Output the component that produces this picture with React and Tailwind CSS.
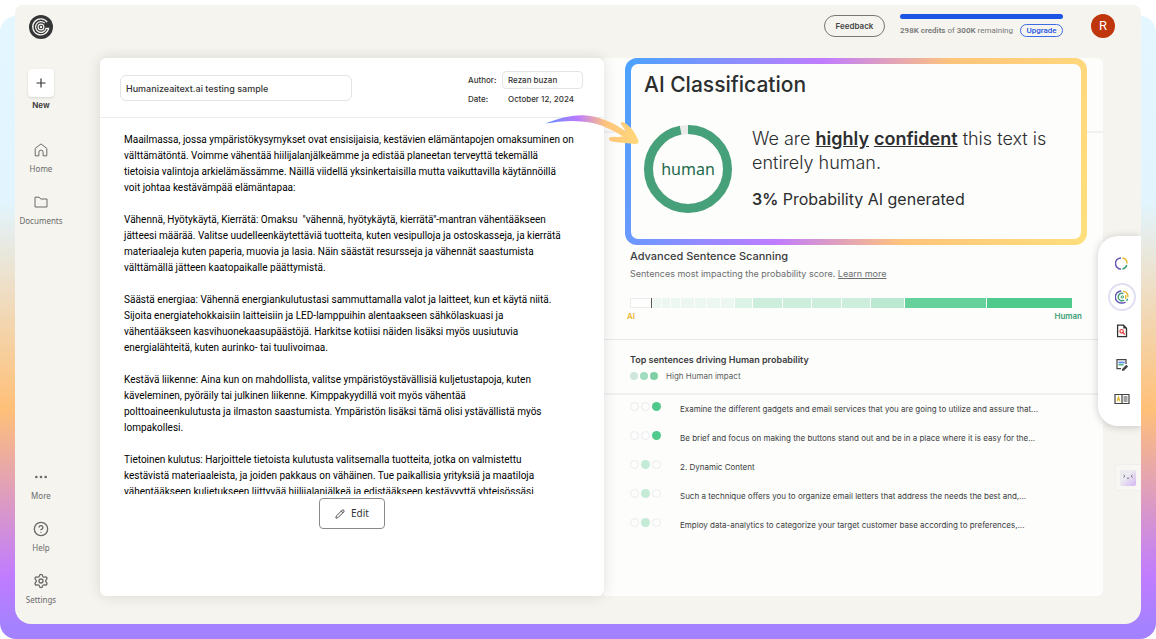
import { Plus, Folder, Ellipsis, CircleHelp, Settings, Pencil } from 'lucide-react';
import clsx from 'clsx';

const PARAGRAPHS = [
  [
    'Maailmassa, jossa ympäristökysymykset ovat ensisijaisia, kestävien elämäntapojen omaksuminen on',
    'välttämätöntä. Voimme vähentää hiilijalanjälkeämme ja edistää planeetan terveyttä tekemällä',
    'tietoisia valintoja arkielämässämme. Näillä viidellä yksinkertaisilla mutta vaikuttavilla käytännöillä',
    'voit johtaa kestävämpää elämäntapaa:',
  ],
  [
    'Vähennä, Hyötykäytä, Kierrätä: Omaksu  "vähennä, hyötykäytä, kierrätä"-mantran vähentääkseen',
    'jätteesi määrää. Valitse uudelleenkäytettäviä tuotteita, kuten vesipulloja ja ostoskasseja, ja kierrätä',
    'materiaaleja kuten paperia, muovia ja lasia. Näin säästät resursseja ja vähennät saastumista',
    'välttämällä jätteen kaatopaikalle päättymistä.',
  ],
  [
    'Säästä energiaa: Vähennä energiankulutustasi sammuttamalla valot ja laitteet, kun et käytä niitä.',
    'Sijoita energiatehokkaisiin laitteisiin ja LED-lamppuihin alentaakseen sähkölaskuasi ja',
    'vähentääkseen kasvihuonekaasupäästöjä. Harkitse kotiisi näiden lisäksi myös uusiutuvia',
    'energialähteitä, kuten aurinko- tai tuulivoimaa.',
  ],
  [
    'Kestävä liikenne: Aina kun on mahdollista, valitse ympäristöystävällisiä kuljetustapoja, kuten',
    'käveleminen, pyöräily tai julkinen liikenne. Kimppakyydillä voit myös vähentää',
    'polttoaineenkulutusta ja ilmaston saastumista. Ympäristön lisäksi tämä olisi ystävällistä myös',
    'lompakollesi.',
  ],
  [
    'Tietoinen kulutus: Harjoittele tietoista kulutusta valitsemalla tuotteita, jotka on valmistettu',
    'kestävistä materiaaleista, ja joiden pakkaus on vähäinen. Tue paikallisia yrityksiä ja maatiloja',
    'vähentääkseen kuljetukseen liittyvää hiilijalanjälkeä ja edistääkseen kestävyyttä yhteisössäsi.',
  ],
];

const SENTENCES = [
  { text: 'Examine the different gadgets and email services that you are going to utilize and assure that...', level: 3 },
  { text: 'Be brief and focus on making the buttons stand out and be in a place where it is easy for the...', level: 3 },
  { text: '2. Dynamic Content', level: 2 },
  { text: 'Such a technique offers you to organize email letters that address the needs the best and,...', level: 2 },
  { text: 'Employ data-analytics to categorize your target customer base according to preferences,...', level: 2 },
];

const SEGMENTS = [
  { w: 8, c: 'bg-[#ecf7f1]' },
  { w: 8, c: 'bg-[#ecf7f1]' },
  { w: 9, c: 'bg-[#ecf7f1]' },
  { w: 13, c: 'bg-[#ecf7f1]' },
  { w: 12, c: 'bg-[#ecf7f1]' },
  { w: 13, c: 'bg-[#ecf7f1]' },
  { w: 13, c: 'bg-[#ecf7f1]' },
  { w: 17, c: 'bg-[#dcf3e7]' },
  { w: 29, c: 'bg-[#cdeedd]' },
  { w: 29, c: 'bg-[#cdeedd]' },
  { w: 29, c: 'bg-[#cdeedd]' },
  { w: 29, c: 'bg-[#cdeedd]' },
  { w: 33, c: 'bg-[#bbe8d0]' },
  { w: 82, c: 'bg-[#66d19b]' },
  { w: 86, c: 'bg-[#50c98d]' },
];

function Logo() {
  return (
    <svg viewBox="0 0 24 24" className="size-6" fill="none" stroke="#f5f4ef">
      <circle cx="12" cy="12" r="12" fill="#353638" stroke="none" />
      <path d="M18.2 7.1A8 8 0 1 0 19.6 13.4H16.6" strokeWidth="1.3" />
      <path d="M15.8 8.2A5.4 5.4 0 1 0 17.2 13.4" strokeWidth="1.2" />
      <circle cx="12" cy="12" r="2.9" strokeWidth="1.2" />
      <circle cx="12" cy="12" r="1.2" fill="#f5f4ef" stroke="none" />
    </svg>
  );
}

function HomeIcon({ className }) {
  return (
    <svg viewBox="0 0 14 14" className={className} fill="none" stroke="currentColor" strokeLinejoin="round">
      <path d="M1.2 5.4 7 .9l5.8 4.5v7.4H9.1V9.2a2.1 2.1 0 0 0-4.2 0v3.6H1.2z" />
    </svg>
  );
}

function FolderIcon({ className }) {
  return (
    <svg viewBox="0 0 14 14" className={className} fill="none" stroke="currentColor" strokeLinejoin="round">
      <path d="M1 2.200H5.200L6.800 4H13V12H1Z" />
    </svg>
  );
}

function NavItem({ icon: Icon, label, className = 'size-4' }) {
  return (
    <button type="button" className="flex flex-col items-center gap-[5px] font-['Noto_Sans'] text-[8px] leading-3 text-[#6a6a6a]">
      <span className="flex h-4 items-center"><Icon className={className} strokeWidth={2} /></span>
      {label}
    </button>
  );
}

function Sidebar() {
  return (
    <nav className="flex w-[52px] shrink-0 flex-col items-center pt-[10px] pb-[18px]">
      <Logo />
      <button type="button" className="mt-[30px] flex flex-col items-center gap-[2px] text-[8px] leading-3 font-semibold text-[#333]">
        <span className="flex h-7 w-[26px] items-center justify-center rounded bg-white shadow-sm">
          <Plus className="size-[14px]" strokeWidth={2} />
        </span>
        New
      </button>
      <div className="mt-[31px] flex flex-col gap-[19px]">
        <NavItem icon={HomeIcon} label="Home" className="size-[14px]" />
        <NavItem icon={FolderIcon} label="Documents" className="size-[14px]" />
      </div>
      <div className="mt-auto flex flex-col gap-[19px]">
        <NavItem icon={Ellipsis} label="More" />
        <NavItem icon={CircleHelp} label="Help" />
        <NavItem icon={Settings} label="Settings" />
      </div>
    </nav>
  );
}

function TopBar() {
  return (
    <header className="flex h-[53px] items-start justify-end pt-[9px] pr-[26px]">
      <button type="button" className="mt-px h-[22px] w-[61px] rounded-full border border-[#777] text-[8px] font-semibold text-[#444]">
        Feedback
      </button>
      <div className="ml-[15px] w-[163px] font-[Roboto]">
        <div className="h-[5px] rounded-full bg-[#1d55e5]" />
        <div className="mt-[5px] flex items-center justify-between">
          <span className="text-[8px] leading-[13px] whitespace-nowrap text-[#777]">
            <b className="font-semibold">298K credits</b> of <b className="font-semibold">300K</b> remaining
          </span>
          <button type="button" className="h-[13px] w-[43px] rounded-full border border-[#3c6be8] text-[8px] leading-[11px] font-medium text-[#1d55e5]">
            Upgrade
          </button>
        </div>
      </div>
      <div className="ml-7 flex size-6 items-center justify-center rounded-full bg-[#bf360c] font-[Roboto] text-[13px] text-white">R</div>
    </header>
  );
}

function DocumentCard() {
  return (
    <section className="relative z-10 rounded-md bg-white shadow-[0_0_14px_rgba(0,0,0,0.12)]">
      <div className="flex h-[60px] items-start justify-between border-b border-[#ececec] pr-[21px] pl-5">
        <input
          aria-label="Title"
          defaultValue="Humanizeaitext.ai testing sample"
          className="mt-[17px] h-[26px] w-[232px] rounded-md border border-[#e4e4e4] px-[5px] text-[9px] font-medium text-[#333]"
        />
        <div className="mt-[13px] grid grid-cols-[34px_81px] items-center gap-y-1 text-[8px] font-medium text-[#333]">
          <label htmlFor="author">Author:</label>
          <input id="author" defaultValue="Rezan buzan" className="h-[18px] w-full rounded border border-[#e4e4e4] px-[5px]" />
          <span>Date:</span>
          <span className="pl-[6px] leading-3">October 12, 2024</span>
        </div>
      </div>
      <div className="mt-[14px] h-[362px] overflow-hidden pl-6 font-[Roboto] text-[10px] leading-4 whitespace-pre text-black">
        {PARAGRAPHS.map((lines) => (
          <p key={lines[0]} className="mb-4">{lines.join('\n')}</p>
        ))}
      </div>
      <button type="button" className="mx-auto mt-1 flex h-[31px] w-[66px] items-center justify-center gap-[6px] rounded border border-[#8a8a8a] font-['Noto_Sans'] text-[10px] text-[#333]">
        <Pencil className="size-[10px]" strokeWidth={2} />
        Edit
      </button>
    </section>
  );
}

function Classification() {
  return (
    <div className="relative mr-4 ml-[21px] h-[187px] rounded-[12px] bg-[linear-gradient(105deg,#4aa3ff_0%,#c07cff_39%,#ffc47a_64%,#ffdf7c_100%)] p-[6px]">
      <div className="h-full rounded-[7px] bg-[#fdfdfb] px-[13px] pt-2 text-[#2c2e30]">
        <h2 className="text-[21px] leading-[26px] font-medium">AI Classification</h2>
        <div className="mt-[27px] flex gap-5">
          <svg viewBox="0 0 88 88" className="size-[88px] shrink-0">
            <circle cx="44" cy="44" r="39.5" fill="none" stroke="#ebebeb" strokeWidth="9" />
            <circle cx="44" cy="44" r="39.5" fill="none" stroke="#46a079" strokeWidth="9" pathLength="100" strokeDasharray="97 3" transform="rotate(-90 44 44)" />
            <text x="44" y="50" textAnchor="middle" className="fill-[#22694b] font-['Noto_Sans'] text-[16px]">human</text>
          </svg>
          <div className="pt-[2px]">
            <p className="text-[18px] leading-6 font-light whitespace-nowrap">
              We are <b className="font-semibold underline">highly</b> <b className="font-semibold underline">confident</b> this text is
              <br />
              entirely human.
            </p>
            <p className="mt-[14px] text-[16px] leading-5"><b className="font-semibold">3%</b> Probability AI generated</p>
          </div>
        </div>
      </div>
    </div>
  );
}

function Dots({ level }) {
  return (
    <span className="mb-1 flex gap-[2px]">
      {[1, 2, 3].map((n) => (
        <span
          key={n}
          className={clsx('size-[9px] rounded-full', n !== level && 'border border-[#ececf0]', n === level && (level === 3 ? 'bg-[#50c98d]' : 'bg-[#c3ebd6]'))}
        />
      ))}
    </span>
  );
}

function Results() {
  return (
    <section className="relative rounded-r-md bg-[#fdfdfb] text-[#3a3c3e]">
      <div className="absolute inset-x-0 top-[73px] border-t-2 border-[#f1f1f1]" />
      <Classification />
      <div className="h-[95px] border-b border-[#e8e8e8] pr-[31px] pl-[26px] pt-1">
        <h3 className="text-[11px] leading-[14px] font-medium">Advanced Sentence Scanning</h3>
        <p className="mt-[5px] text-[9px] leading-3 text-[#6c6e70]">
          Sentences most impacting the probability score. <a href="#learn" className="underline">Learn more</a>
        </p>
        <div className="mt-[18px] flex h-[10px] gap-px">
          <span className="w-5 border border-r-0 border-[#ececec] bg-white" />
          <span className="w-px bg-[#555]" />
          {SEGMENTS.map((s, i) => (
            <span key={i} className={s.c} style={{ flexGrow: s.w }} />
          ))}
        </div>
        <div className="-mr-[10px] -ml-[3px] mt-[2px] flex justify-between text-[8px] leading-3 font-semibold">
          <span className="text-[#e8b62e]">AI</span>
          <span className="text-[#3d9e76]">Human</span>
        </div>
      </div>
      <div className="h-[55px] border-b-2 border-[#f1f1f3] pl-[26px] pt-[13px]">
        <h3 className="text-[9px] leading-[14px] font-semibold">Top sentences driving Human probability</h3>
        <div className="mt-[3px] flex items-center gap-2 text-[8px] leading-3 text-[#5c5e60]">
          <span className="flex gap-[2px]">
            <span className="size-2 rounded-full bg-[#cfe6dc]" />
            <span className="size-2 rounded-full bg-[#9fdcbd]" />
            <span className="size-2 rounded-full bg-[#7ed0a4]" />
          </span>
          High Human impact
        </div>
      </div>
      <ul className="-mt-px pl-[26px]">
        {SENTENCES.map((s) => (
          <li key={s.text} className="flex h-[29px] items-center gap-[19px] text-[8px] whitespace-nowrap">
            <Dots level={s.level} />
            {s.text}
          </li>
        ))}
      </ul>
    </section>
  );
}

function Arrow() {
  return (
    <svg viewBox="0 0 96 34" className="absolute top-[109px] left-[530px] z-20 h-[34px] w-24">
      <defs>
        <linearGradient id="arrow">
          <stop offset="0" stopColor="#5f8cff" />
          <stop offset="0.35" stopColor="#bb7cff" />
          <stop offset="0.65" stopColor="#ffc47a" />
          <stop offset="1" stopColor="#ffd87a" />
        </linearGradient>
      </defs>
      <path
        fill="url(#arrow)"
        d="M0 9.500C12 5 24 1 38 1.200 54 2 68 8 81 17.500L76 10Q75 7 79 8.500C86 12 91 20 93.500 27Q94 30 90 30L70 28Q63 27 64 24.500 65 22 72 23L78 22.500C64 13.500 50 8 36 7.500 24 6 12 8 0 9.500Z"
      />
    </svg>
  );
}

function Ring({ className }) {
  return (
    <svg viewBox="0 0 14 14" className={className} fill="none" strokeWidth="1.500">
      <path d="M6.500 1A6 6 0 0 0 6.500 13" stroke="#5f51b5" />
      <path d="M8 1.100A6 6 0 0 1 13 7" stroke="#e8b62e" />
      <path d="M12.700 8.600A6 6 0 0 1 8 12.900" stroke="#3d9e76" />
    </svg>
  );
}

function ToolRail() {
  return (
    <aside className="absolute top-[231px] right-0 z-30 flex h-[190px] w-[43px] flex-col items-center justify-between rounded-l-[20px] bg-white py-[21px] pl-1 shadow-[0_1px_8px_rgba(0,0,0,0.2)]">
      <button type="button" aria-label="Classification"><Ring className="size-[13px]" /></button>
      <button type="button" aria-label="Advanced scan" className="-my-2 flex size-7 items-center justify-center rounded-full border-2 border-[#e2dff2]">
        <svg viewBox="0 0 14 14" className="size-[14px]" fill="none" strokeWidth="1.400">
          <path d="M6.300 1A6 6 0 0 0 6.300 13 6 6 0 0 0 10.500 12" stroke="#5f51b5" />
          <path d="M8 1.100A6 6 0 0 1 13 7M10.300 5A4 4 0 0 1 10.500 8.800" stroke="#e8b62e" />
          <path d="M12.600 8.800A6 6 0 0 1 11.600 10.800M8.500 3.500A3.800 3.800 0 1 0 9 10.200" stroke="#3d9e76" />
          <circle cx="7.300" cy="7" r="1.200" stroke="#3d9e76" strokeWidth="1" />
        </svg>
      </button>
      <button type="button" aria-label="Plagiarism">
        <svg viewBox="0 0 12 14" className="h-[14px] w-3" fill="none">
          <path d="M1.600 1.200H7.500L10.500 4.200V12.600H1.600Z" stroke="#333" strokeWidth="1.300" />
          <path d="M7.300 1V4.400H10.700Z" fill="#333" />
          <circle cx="5.600" cy="7.200" r="1.700" stroke="#e53935" strokeWidth="1.200" />
          <path d="M6.900 8.600 8.800 10.500" stroke="#e53935" strokeWidth="1.300" />
        </svg>
      </button>
      <button type="button" aria-label="Writing feedback">
        <svg viewBox="0 0 14 14" className="size-[14px]" fill="none">
          <path d="M11 6V1.600H2V10.600H6" stroke="#444" strokeWidth="1.200" />
          <path d="M3.500 4.500H9.700" stroke="#5b8def" strokeWidth="1.800" />
          <path d="M3.500 6.800H8.500" stroke="#59b98b" strokeWidth="1.600" />
          <path d="m6.800 13 .5-2.200 4-4 1.800 1.800-4 4z" fill="#444" />
        </svg>
      </button>
      <button type="button" aria-label="Readability">
        <svg viewBox="0 0 16 12" className="h-3 w-4" fill="none" stroke="#444">
          <path d="M1 1.500H15V10.500H1ZM8 1.500V10.500" strokeWidth="1.200" />
          <path d="M9.500 4H13.500M9.500 6H13.500M9.500 8H13.500" />
          <path d="M3 8.300 4.500 3.800 6 8.300M3.500 6.800H5.500" stroke="#e8b62e" strokeWidth="1.100" />
        </svg>
      </button>
    </aside>
  );
}

function App() {
  return (
    <div className="relative flex min-h-screen flex-col bg-white px-[15px] pt-[5px] pb-[15px] font-[Inter,sans-serif]">
      <div className="absolute inset-x-0 top-4 bottom-0 rounded-2xl bg-[linear-gradient(180deg,#e4f6ff_0%,#e2f4fd_30%,#ffc078_63%,#c07cff_90%,#a482ff_98%)]" />
      <div className="relative flex flex-1 overflow-hidden rounded-t-lg rounded-b-[16px] bg-[#f5f4ef]">
        <Sidebar />
        <div className="flex min-w-0 flex-1 flex-col">
          <TopBar />
          <main className="relative mr-[38px] mb-7 ml-[33px] grid flex-1 grid-cols-[504fr_499fr]">
            <DocumentCard />
            <Results />
          </main>
        </div>
        <Arrow />
        <ToolRail />
        <div className="absolute top-[459px] right-0 flex h-[27px] w-[26px] items-center rounded-l border border-r-0 border-[#f0efeb] bg-[#f8f7f4] pl-1">
          <svg viewBox="0 0 16 16" className="size-4" fill="none" stroke="#77757f">
            <defs>
              <linearGradient id="face" x1="0" y1="0" x2="1" y2="1">
                <stop offset="0.4" stopColor="#ebebf0" />
                <stop offset="1" stopColor="#d5b5f2" />
              </linearGradient>
            </defs>
            <rect width="16" height="16" rx="2" fill="url(#face)" stroke="none" />
            <path d="m3.500 5 1.500 1.200-1.500 1.200M12.500 5 11 6.200l1.500 1.200M7 8.200h2" />
          </svg>
        </div>
      </div>
    </div>
  );
}

export default App;
